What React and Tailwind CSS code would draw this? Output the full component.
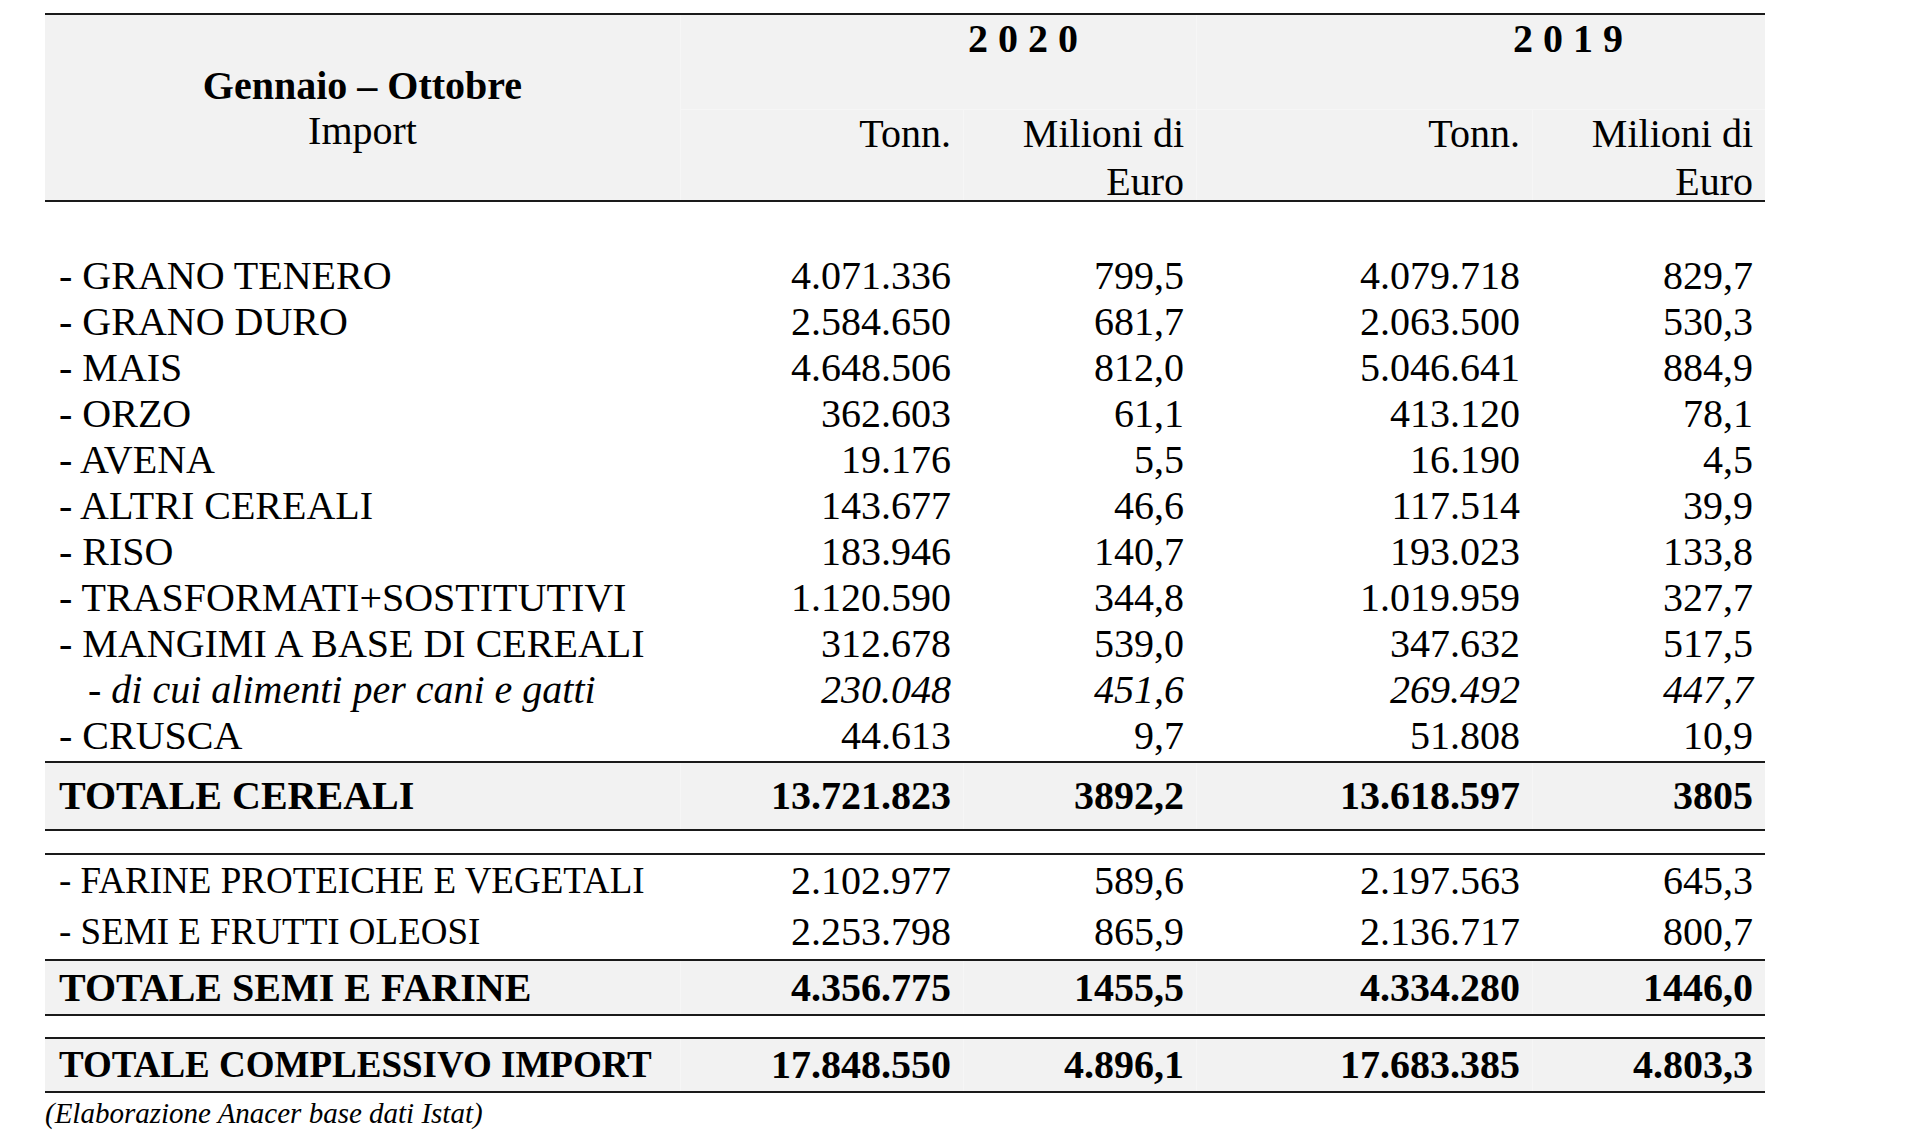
const cols = "grid grid-cols-[635px_283px_233px_336px_233px]";

// righe dei cereali
const cereali = [
  ["- GRANO TENERO", "4.071.336", "799,5", "4.079.718", "829,7"],
  ["- GRANO DURO", "2.584.650", "681,7", "2.063.500", "530,3"],
  ["- MAIS", "4.648.506", "812,0", "5.046.641", "884,9"],
  ["- ORZO", "362.603", "61,1", "413.120", "78,1"],
  ["- AVENA", "19.176", "5,5", "16.190", "4,5"],
  ["- ALTRI CEREALI", "143.677", "46,6", "117.514", "39,9"],
  ["- RISO", "183.946", "140,7", "193.023", "133,8"],
  ["- TRASFORMATI+SOSTITUTIVI", "1.120.590", "344,8", "1.019.959", "327,7"],
  ["- MANGIMI A BASE DI CEREALI", "312.678", "539,0", "347.632", "517,5"],
  ["- di cui alimenti per cani e gatti", "230.048", "451,6", "269.492", "447,7", true],
  ["- CRUSCA", "44.613", "9,7", "51.808", "10,9"],
];

const semi = [
  ["- FARINE PROTEICHE E VEGETALI", "2.102.977", "589,6", "2.197.563", "645,3"],
  ["- SEMI E FRUTTI OLEOSI", "2.253.798", "865,9", "2.136.717", "800,7"],
];

function Row({ row, height, labelSize = "text-[40px]" }) {
  const italic = row[5];
  return (
    <div className={`${cols} items-center ${height} ${italic ? "italic" : ""}`}>
      <div className={`${italic ? "pl-[43px]" : "pl-[14px]"} ${labelSize} whitespace-nowrap`}>{row[0]}</div>
      {row.slice(1, 5).map((v, i) => (
        <div key={i} className="text-right pr-[12px]">{v}</div>
      ))}
    </div>
  );
}

function TotalRow({ label, values, height, labelSize = "text-[40px]" }) {
  return (
    <div className={`${cols} items-center ${height} bg-[#f2f2f2] font-bold border-y-2 border-[#1a1a1a]`}>
      <div className={`pl-[14px] ${labelSize} whitespace-nowrap`}>{label}</div>
      {values.map((v, i) => (
        <div key={i} className="text-right pr-[12px] h-full flex items-center justify-end border-l border-[#f6f6f6]">{v}</div>
      ))}
    </div>
  );
}

export default function App() {
  return (
    <div className="w-[1920px] h-[1133px] bg-white text-black overflow-hidden font-['Liberation_Serif',serif] text-[40px] leading-[40px]">
      <div className="ml-[45px] pt-[13px] w-[1720px]">
        {/* intestazione */}
        <div className={`${cols} grid-rows-[94px_91px] bg-[#f2f2f2] border-y-2 border-[#1a1a1a]`}>
          <div className="row-span-2 flex flex-col items-center justify-center leading-[45px]">
            <div className="font-bold">Gennaio – Ottobre</div>
            <div>Import</div>
          </div>
          <div className="col-span-2 border-l border-[#f6f6f6] pl-[287px] pt-[4px] font-bold whitespace-pre">2 0 2 0</div>
          <div className="col-span-2 border-l border-[#f6f6f6] pl-[316px] pt-[4px] font-bold whitespace-pre">2 0 1 9</div>
          <div className="border-l border-t border-[#f6f6f6] text-right pr-[12px] leading-[48px]">Tonn.</div>
          <div className="border-l border-t border-[#f6f6f6] text-right pr-[12px] leading-[48px]">Milioni di<br />Euro</div>
          <div className="border-l border-t border-[#f6f6f6] text-right pr-[12px] leading-[48px]">Tonn.</div>
          <div className="border-l border-t border-[#f6f6f6] text-right pr-[12px] leading-[48px]">Milioni di<br />Euro</div>
        </div>

        {/* cereali */}
        <div className="pt-[51px] pb-[2px]">
          {cereali.map((r, i) => (
            <Row key={i} row={r} height="h-[46px]" />
          ))}
        </div>
        <TotalRow label="TOTALE CEREALI" values={["13.721.823", "3892,2", "13.618.597", "3805"]} height="h-[70px]" />

        {/* semi e farine */}
        <div className="mt-[22px] border-t-2 border-[#1a1a1a] pb-[2px]">
          {semi.map((r, i) => (
            <Row key={i} row={r} height="h-[51px]" labelSize="text-[37px]" />
          ))}
        </div>
        <TotalRow label="TOTALE SEMI E FARINE" values={["4.356.775", "1455,5", "4.334.280", "1446,0"]} height="h-[57px]" />

        <div className="mt-[21px]">
          <TotalRow label="TOTALE COMPLESSIVO IMPORT" values={["17.848.550", "4.896,1", "17.683.385", "4.803,3"]} height="h-[56px]" labelSize="text-[37px]" />
        </div>

        <div className="mt-[4px] italic text-[29px] leading-[32px]">(Elaborazione Anacer base dati Istat)</div>
      </div>
    </div>
  );
}
